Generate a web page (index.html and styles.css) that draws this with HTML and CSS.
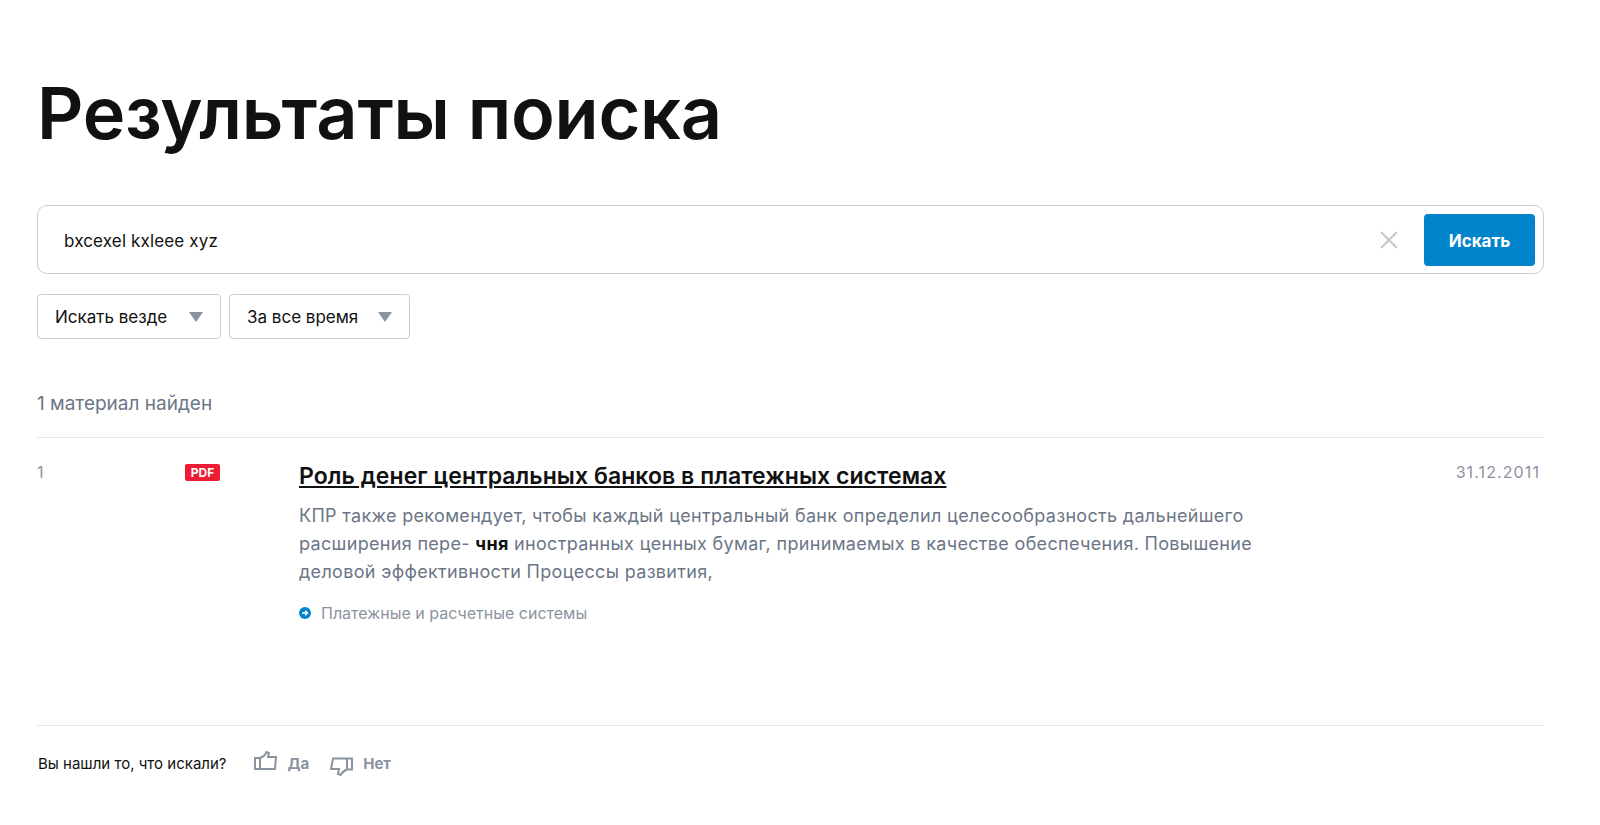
FILE: index.html
```html
<!DOCTYPE html>
<html lang="ru">
<head>
    <meta charset="UTF-8">
    <meta name="viewport" content="width=device-width, initial-scale=1.0">
    <title>Результаты поиска</title>
    <link rel="stylesheet" href="styles.css">
</head>
<body>
    <h1>Результаты поиска</h1>

    <form class="search-box" onsubmit="return false">
        <input class="search-input" type="text" value="bxcexel kxleee xyz">
        <svg class="search-clear" width="18" height="18" viewBox="0 0 18 18"><path d="M1 1l16 16M17 1L1 17"/></svg>
        <button class="search-btn">Искать</button>
    </form>

    <div class="filters">
        <div class="filter filter-where">Искать везде<span class="arrow"></span></div>
        <div class="filter filter-when">За все время<span class="arrow"></span></div>
    </div>

    <p class="count">1 материал найден</p>

    <div class="result">
        <div class="result-num">1</div>
        <div class="result-type"><span class="pdf">PDF</span></div>
        <div class="result-body">
            <a class="result-title" href="#">Роль денег центральных банков в платежных системах</a>
            <p class="snippet">КПР также рекомендует, чтобы каждый центральный банк определил целесообразность дальнейшего расширения пере- <b>чня</b> иностранных ценных бумаг, принимаемых в качестве обеспечения. Повышение деловой эффективности Процессы развития,</p>
            <div class="tag">
                <svg width="12" height="12" viewBox="0 0 12 12"><circle cx="6" cy="6" r="6" fill="#0284cb"/><path d="M3 6h5.400M6.200 3.700L8.500 6 6.200 8.300" fill="none" stroke="#fff" stroke-width="1.500"/></svg>
                Платежные и расчетные системы
            </div>
        </div>
        <div class="result-date">31.12.2011</div>
    </div>

    <div class="feedback">
        <span class="feedback-text">Вы нашли то, что искали?</span>
        <span class="vote vote-yes">
            <svg width="23" height="19" viewBox="0 0 23 19"><path d="M1 7h5v11H1zM6 7c3-1 5-2.500 6.500-6l2.500 1-1 4h8l-1 12H6"/></svg>
            Да
        </span>
        <span class="vote vote-no">
            <svg width="23" height="19" viewBox="0 0 23 19"><path d="M22 1.500h-5v11h5zM17 12.500c-3 1-5 3-6.500 5.500L8 17l1-5H1L3 1.500h14"/></svg>
            Нет
        </span>
    </div>
</body>
</html>
```

FILE: styles.css
```css
* {
    box-sizing: border-box;
}
body {
    margin: 0;
    padding: 0 56px 0 37px;
    font-family: Inter, "Noto Sans", sans-serif;
    background-color: #fff;
    color: #111;
}
h1 {
    margin: 0;
    padding-top: 69px;
    height: 205px;
    font-size: 72px;
    line-height: 87px;
    font-weight: 600;
    letter-spacing: -0.24px;
}
.search-box {
    display: flex;
    align-items: center;
    height: 69px;
    padding: 0 8px 0 26px;
    border: 1px solid #ccc;
    border-radius: 10px;
}
.search-input {
    flex: 1;
    border: 0;
    outline: 0;
    padding: 2px 0 0;
    font: 17px Inter, sans-serif;
    letter-spacing: 0.15px;
    color: #111;
}
.search-clear {
    margin-right: 26px;
}
.search-clear path {
    fill: none;
    stroke: #c3c8d0;
    stroke-width: 2;
}
.search-btn {
    width: 111px;
    height: 52px;
    padding: 2px 0 0;
    border: 0;
    border-radius: 4px;
    background-color: #0284cb;
    color: #fff;
    font: 700 17px Inter, sans-serif;
}
.filters {
    display: flex;
    gap: 8px;
    margin-top: 20px;
}
.filter {
    display: flex;
    align-items: center;
    justify-content: space-between;
    height: 45px;
    padding: 0 17px;
    border: 1px solid #ccc;
    border-radius: 4px;
    font-size: 17px;
}
.filter-where {
    width: 184px;
}
.filter-when {
    width: 181px;
}
.arrow {
    width: 0;
    height: 0;
    border-left: 7px solid transparent;
    border-right: 7px solid transparent;
    border-top: 10px solid #8b93a1;
}
.count {
    margin: 53px 0 0;
    height: 45px;
    font-size: 19px;
    line-height: 24px;
    color: #6c7686;
}
.result {
    display: grid;
    grid-template-columns: 148px 114px 1fr 100px;
    height: 289px;
    padding-top: 24px;
    border-top: 1px solid #e6e6e6;
    border-bottom: 1px solid #e6e6e6;
}
.result-num {
    margin-top: 1px;
    font-size: 16px;
    line-height: 18px;
    color: #8b93a1;
}
.pdf {
    display: block;
    width: 35px;
    height: 17px;
    margin-top: 2px;
    border-radius: 2px;
    background-color: #ed1b34;
    color: #fff;
    font-size: 12px;
    font-weight: 700;
    line-height: 17px;
    text-align: center;
}
.result-body {
    max-width: 960px;
}
.result-title {
    display: block;
    font-size: 23px;
    line-height: 28px;
    font-weight: 600;
    letter-spacing: 0.06px;
    color: #111;
}
.snippet {
    margin: 12px 0 0;
    font-size: 18px;
    line-height: 28px;
    letter-spacing: 0.32px;
    color: #6c7686;
}
.snippet b {
    font-weight: 700;
    color: #111;
}
.tag {
    display: flex;
    align-items: center;
    gap: 10px;
    margin-top: 17px;
    font-size: 16px;
    line-height: 20px;
    color: #8b93a1;
}
.result-date {
    margin-top: 1px;
    font-size: 16px;
    line-height: 18px;
    letter-spacing: 1.1px;
    color: #8b93a1;
    text-align: right;
    padding-right: 4px;
}
.feedback {
    display: flex;
    align-items: center;
    padding-top: 25px;
    font-size: 15px;
}
.feedback-text {
    margin-left: 1px;
    margin-right: 28px;
}
.vote {
    display: flex;
    align-items: center;
    gap: 10px;
    font-weight: 700;
    color: #8b93a1;
}
.vote-yes svg {
    margin-bottom: 6px;
}
.vote-no {
    margin-left: 21px;
}
.vote-no svg {
    margin-top: 6px;
}
.vote svg {
    fill: none;
    stroke: #8b93a1;
    stroke-width: 2;
}
```
